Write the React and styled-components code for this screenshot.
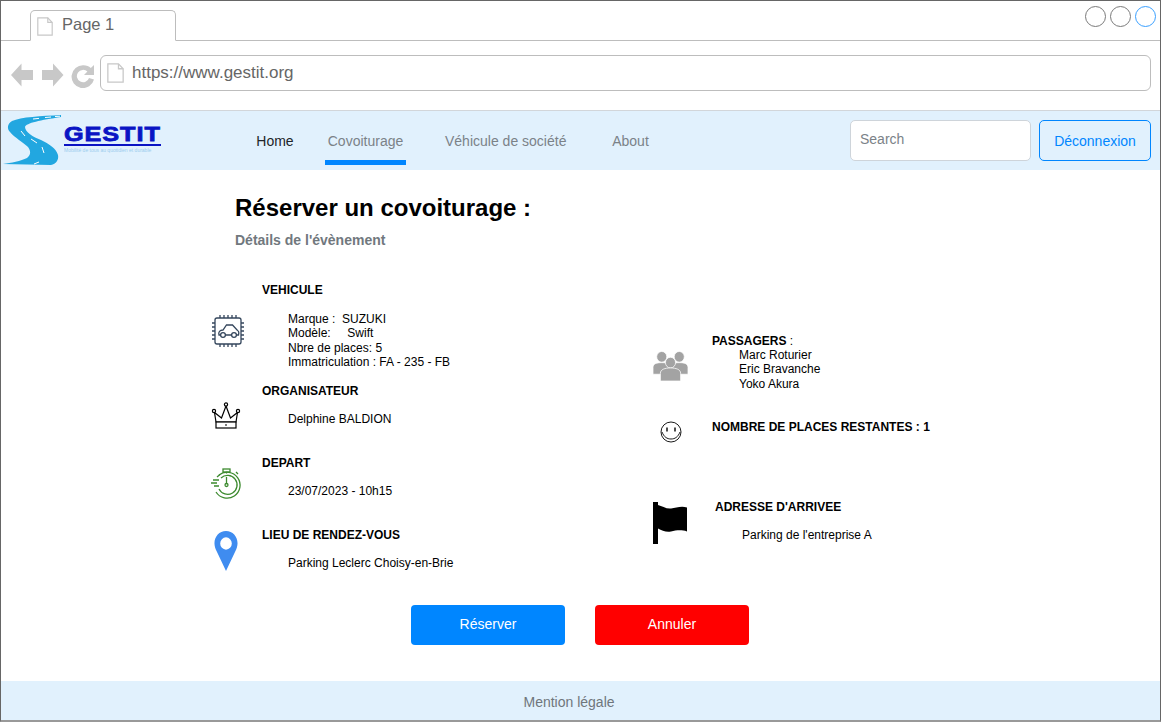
import React from 'react';
import styled, { createGlobalStyle } from 'styled-components';

const GlobalStyle = createGlobalStyle`
  html, body { margin: 0; padding: 0; background: #fff; }
  body { font-family: "Liberation Sans", Arial, sans-serif; }
`;

function PageIcon({ size = 16, h = 19 }) {
  return (
    <svg width={size} height={h} viewBox="0 0 16 18" preserveAspectRatio="none" fill="#fff" stroke="#c8c8c8" strokeWidth="1.2">
      <path d="M.8.8h10l4.4 4.4v12H.8z" />
      <path d="M10.8.8v4.4h4.4" fill="none" />
    </svg>
  );
}

function NavArrows() {
  return (
    <svg width="84" height="26" viewBox="0 0 84 26" fill="#c8c8c8">
      <path d="M0 13 10.500 1.500v6.500H22v10H10.500v6.500z" />
      <path d="M52.500 13 42 1.500v6.500H31v10h11v6.500z" />
      <path d="M71 3.800c3 0 5.400 1 7.300 2.800L81.500 3.500v10h-10l3.400-3.400a6.200 6.200 0 1 0 1.600 6.300l5 1.600A11.400 11.400 0 1 1 71 3.800z" transform="translate(1.500 -.5)" />
    </svg>
  );
}

function Logo() {
  return (
    <svg width="62" height="54" viewBox="0 0 62 54">
      <path d="M60 1C40 2 20 3 11 7 6 10 6 15 9 18c5 6 13 10 18 15 3 4 3 8-1 11-6 3-16 5-24 6l48 1c5-1 8-5 7-10-2-7-9-11-17-15-8-3-16-8-16-13 1-4 16-7 36-10z" fill="#22a7e0" />
      <path d="M32 5l6-.6M44 3.500l6-.5M54 2.500l5-.3M20 17l4 5M30 25l6 4M41 33l2 6M38 48l-5 2" stroke="#fff" strokeWidth="1" fill="none" />
    </svg>
  );
}

function CarChipIcon() {
  return (
    <svg width="34" height="34" viewBox="0 0 34 34" fill="none" stroke="#34465c" strokeWidth="1.3">
      <rect x="4" y="4" width="26" height="26" rx="2" />
      <path d="M9 1v3M13 1v3M17 1v3M21 1v3M25 1v3M9 30v3M13 30v3M17 30v3M21 30v3M25 30v3M1 9h3M1 13h3M1 17h3M1 21h3M1 25h3M30 9h3M30 13h3M30 17h3M30 21h3M30 25h3" />
      <path d="M9.500 21H8c-1-3 1-5 4-5l3.500-5h6l5 5.500c1.500.5 1.500 2.500 1 4.500h-2.500M14.500 21h6" />
      <circle cx="12" cy="21" r="2.400" />
      <circle cx="23" cy="21" r="2.400" />
    </svg>
  );
}

function CrownIcon() {
  return (
    <svg width="30" height="28" viewBox="0 0 30 28" fill="#fff" stroke="#000" strokeWidth="1.200">
      <path d="M5 20 3.500 10.500l7 5.500L15 4l4.500 12 7-5.500L25 20z" />
      <rect x="5" y="20" width="20" height="6" />
      <circle cx="15" cy="2.500" r="1.600" />
      <circle cx="3" cy="9" r="1.600" />
      <circle cx="27" cy="9" r="1.600" />
      <path d="M14 23h2" />
    </svg>
  );
}

function TimerIcon() {
  return (
    <svg width="32" height="32" viewBox="0 0 32 32" fill="none" stroke="#3c8a2e" strokeWidth="1.300">
      <path d="M8 7A13 13 0 1 1 5 24" />
      <path d="M10 10a9.500 9.500 0 1 1-2 11" />
      <rect x="12" y="1" width="7" height="3" />
      <path d="M15.500 4v1.500M25 4l2 2M6 9l3-2.500M2 12h6M0 15h6M3 18h5" />
      <path d="M15.500 9v6.500" />
      <circle cx="15.500" cy="17" r="1.500" />
    </svg>
  );
}

function PinIcon() {
  return (
    <svg width="24" height="41" viewBox="0 0 26 42" preserveAspectRatio="none">
      <path fillRule="evenodd" d="M13 0C5.800 0 .5 5.600.5 12.500c0 3 1 5.500 2.500 8.500L13 41l10-20c1.500-3 2.500-5.500 2.500-8.500C25.500 5.600 20.200 0 13 0zm0 6.500a6.300 6.300 0 1 1 0 12.600 6.300 6.300 0 0 1 0-12.600z" fill="#3f8cf0" />
    </svg>
  );
}

function PeopleIcon() {
  return (
    <svg width="35" height="31" viewBox="0 0 38 32" preserveAspectRatio="none" fill="#a3a3a3" stroke="#fff" strokeWidth=".8">
      <circle cx="9.500" cy="6" r="5.500" />
      <circle cx="28.500" cy="6" r="5.500" />
      <path d="M0 24v-7c0-4 4-5 9.500-5s9.500 1 9.500 5v7zM19 24v-7c0-4 4-5 9.500-5s9.500 1 9.500 5v7z" />
      <circle cx="19" cy="12" r="5.500" />
      <path d="M8 31v-8c0-4 5-5.500 11-5.500S30 19 30 23v8z" />
    </svg>
  );
}

function SmileyIcon() {
  return (
    <svg width="22" height="22" viewBox="0 0 22 22" fill="none" stroke="#000" strokeWidth=".9">
      <circle cx="11" cy="11" r="10" />
      <path d="M2 11c2 5 5 7 9 7s7-2 9-7" />
      <path d="M7 6.500v4M15 6.500v4" strokeWidth="1.400" />
    </svg>
  );
}

function FlagIcon() {
  return (
    <svg width="34" height="42" viewBox="0 0 34 42" fill="#000">
      <rect x="0" y="0" width="5" height="42" />
      <path d="M5 3c4 1 8 4 13 3.500s10-3 16-1v24c-6-2-11-1-16 0s-9-1-13-3z" />
    </svg>
  );
}

const leftItems = [
  { key: 'veh', icon: <CarChipIcon />, title: 'VEHICULE', lines: ['Marque :  SUZUKI', 'Modèle:     Swift', 'Nbre de places: 5', 'Immatriculation : FA - 235 - FB'], gap: 15, iconTop: 31, mb: 14 },
  { key: 'org', icon: <CrownIcon />, title: 'ORGANISATEUR', lines: ['Delphine BALDION'], gap: 14, iconTop: 18, mb: 30 },
  { key: 'dep', icon: <TimerIcon />, title: 'DEPART', lines: ['23/07/2023 - 10h15'], gap: 14, iconTop: 12, mb: 30 },
  { key: 'lieu', icon: <PinIcon />, title: 'LIEU DE RENDEZ-VOUS', lines: ['Parking Leclerc Choisy-en-Brie'], gap: 14, iconTop: 3, iconLeft: 3, mb: 0 },
];

function App() {
  return (
    <Frame>
      <GlobalStyle />
      <TabBar>
        <Tab>
          <PageIcon />
          Page 1
        </Tab>
        <WindowButtons>
          <WindowDot />
          <WindowDot />
          <WindowDot $active />
        </WindowButtons>
      </TabBar>

      <AddressRow>
        <NavArrows />
        <UrlBar>
          <PageIcon size={17} h={20} />
          https://www.gestit.org
        </UrlBar>
      </AddressRow>

      <NavBar>
        <LogoBox>
          <Logo />
          <Brand>
            <BrandName><BrandLetters>GESTIT</BrandLetters></BrandName>
            <BrandTag>Mobilité de tous au quotidien et durable</BrandTag>
          </Brand>
        </LogoBox>
        <NavLinks>
          <NavLink $dark $w={38}>Home</NavLink>
          <NavLink $active $w={81}>Covoiturage</NavLink>
          <NavLink $w={120}>Véhicule de société</NavLink>
          <NavLink $w={37}>About</NavLink>
        </NavLinks>
        <SearchBox>Search</SearchBox>
        <LogoutButton>Déconnexion</LogoutButton>
      </NavBar>

      <Main>
        <Title>Réserver un covoiturage :</Title>
        <Subtitle>Détails de l'évènement</Subtitle>

        <Columns>
          <LeftColumn>
            {leftItems.map(item => (
              <InfoRow key={item.key} $mb={item.mb}>
                <IconCell $top={item.iconTop} $left={item.iconLeft}>{item.icon}</IconCell>
                <div>
                  <InfoTitle>{item.title}</InfoTitle>
                  <InfoLines $gap={item.gap}>
                    {item.lines.map(l => <div key={l}>{l}</div>)}
                  </InfoLines>
                </div>
              </InfoRow>
            ))}
          </LeftColumn>

          <RightColumn>
            <RightRow $mb={29}>
              <RightIcon $top={17} $left={2}><PeopleIcon /></RightIcon>
              <div>
                <InfoTitle>PASSAGERS <Plain>:</Plain></InfoTitle>
                <RightLines $gap={0}>
                  <div>Marc Roturier</div>
                  <div>Eric Bravanche</div>
                  <div>Yoko Akura</div>
                </RightLines>
              </div>
            </RightRow>
            <RightRow $mb={66}>
              <RightIcon $top={1} $left={9}><SmileyIcon /></RightIcon>
              <InfoTitle>NOMBRE DE PLACES RESTANTES : 1</InfoTitle>
            </RightRow>
            <RightRow>
              <RightIcon $top={2} $left={2}><FlagIcon /></RightIcon>
              <ArrivalText>
                <InfoTitle>ADRESSE D'ARRIVEE</InfoTitle>
                <RightLines $gap={14}>
                  <div>Parking de l'entreprise A</div>
                </RightLines>
              </ArrivalText>
            </RightRow>
          </RightColumn>
        </Columns>

        <Actions>
          <ActionButton $bg="#0086ff">Réserver</ActionButton>
          <ActionButton $bg="#ff0000">Annuler</ActionButton>
        </Actions>
      </Main>

      <Footer>Mention légale</Footer>
    </Frame>
  );
}

export default App;

const Frame = styled.div`
  box-sizing: border-box;
  width: 1161px;
  height: 722px;
  border: 1px solid #666;
  border-bottom: 2px solid #999;
  display: flex;
  flex-direction: column;
  overflow: hidden;
  background: #fff;
`;

const TabBar = styled.div`
  height: 40px;
  flex: none;
  box-sizing: border-box;
  border-bottom: 1px solid #bdbdbd;
  padding: 9px 4px 0 29px;
  display: flex;
  justify-content: space-between;
  align-items: flex-start;
`;

const Tab = styled.div`
  box-sizing: border-box;
  width: 146px;
  height: 31px;
  border: 1px solid #bdbdbd;
  border-bottom: 1px solid #fff;
  border-radius: 5px 5px 0 0;
  background: #fff;
  padding: 6px 0 0 6px;
  display: flex;
  align-items: flex-start;
  gap: 9px;
  font-size: 16.5px;
  line-height: 15px;
  color: #666;
`;

const WindowButtons = styled.div`
  display: flex;
  gap: 4px;
  margin-top: -4px;
`;

const WindowDot = styled.div`
  box-sizing: border-box;
  width: 21px;
  height: 21px;
  border-radius: 50%;
  border: 1px solid ${p => (p.$active ? '#3aa0ff' : '#7a7a7a')};
`;

const AddressRow = styled.div`
  height: 70px;
  flex: none;
  box-sizing: border-box;
  padding: 14px 9px 0 10px;
  display: flex;
  align-items: flex-start;
  gap: 5px;
  border-bottom: 1px solid #d2d6da;

  & > svg:first-child {
    margin-top: 7px;
  }
`;

const UrlBar = styled.div`
  box-sizing: border-box;
  flex: 1;
  height: 36px;
  border: 1px solid #bdbdbd;
  border-radius: 6px;
  padding-left: 6px;
  display: flex;
  align-items: center;
  gap: 8px;
  font-size: 17px;
  color: #666;
`;

const NavBar = styled.div`
  height: 59px;
  flex: none;
  box-sizing: border-box;
  background: #e1f1fd;
  padding: 0 9px 0 0;
  display: flex;
  align-items: center;
`;

const LogoBox = styled.div`
  width: 255px;
  flex: none;
  align-self: flex-start;
  padding-top: 3px;
  display: flex;
  gap: 1px;
`;

const Brand = styled.div`
  width: 97px;
  padding-top: 9px;
`;

const BrandName = styled.div`
  font-size: 21px;
  line-height: 21px;
  font-weight: 700;
  color: #0a14c4;
  border-bottom: 2px solid #0a14c4;
`;

const BrandLetters = styled.span`
  display: inline-block;
  letter-spacing: 0.8px;
  -webkit-text-stroke: 0.8px #0a14c4;
  transform: scaleX(1.2);
  transform-origin: left center;
`;

const BrandTag = styled.div`
  font-size: 5px;
  line-height: 8px;
  white-space: nowrap;
  overflow: hidden;
  color: #9ccdee;
`;

const NavLinks = styled.div`
  flex: 1;
  align-self: stretch;
  display: flex;
  gap: 42px;
  align-items: flex-start;
`;

const NavLink = styled.div`
  box-sizing: border-box;
  width: ${p => p.$w}px;
  flex: none;
  padding-top: 22px;
  height: 54px;
  font-size: 14px;
  white-space: nowrap;
  text-align: center;
  color: ${p => (p.$dark ? '#212529' : '#7b8288')};
  border-bottom: ${p => (p.$active ? '5px solid #0086ff' : '5px solid transparent')};

  &:nth-child(2) {
    margin-left: -11px;
    margin-right: -3px;
  }
  &:nth-child(4) {
    margin-left: 5px;
  }
`;

const SearchBox = styled.div`
  box-sizing: border-box;
  width: 181px;
  height: 41px;
  margin-right: 8px;
  background: #fff;
  border: 1px solid #ced4da;
  border-radius: 5px;
  padding: 10px 9px;
  font-size: 14px;
  color: #7b8288;
`;

const LogoutButton = styled.div`
  box-sizing: border-box;
  width: 112px;
  height: 41px;
  border: 1px solid #0086ff;
  border-radius: 5px;
  display: flex;
  align-items: center;
  justify-content: center;
  font-size: 14px;
  color: #0086ff;
`;

const Main = styled.main`
  flex: 1;
  padding: 24px 0 0 234px;
  position: relative;
`;

const Title = styled.h1`
  margin: 0;
  font-size: 24px;
  line-height: 28px;
  font-weight: 700;
  color: #000;
`;

const Subtitle = styled.div`
  margin-top: 10px;
  font-size: 14px;
  line-height: 16px;
  font-weight: 700;
  color: #71787e;
`;

const Columns = styled.div`
  display: flex;
  margin: 35px 0 0 -24px;
  height: 296px;
`;

const LeftColumn = styled.div`
  width: 440px;
  flex: none;
`;

const InfoRow = styled.div`
  display: flex;
  margin-bottom: ${p => p.$mb}px;
`;

const IconCell = styled.div`
  box-sizing: border-box;
  width: 51px;
  height: 0;
  flex: none;
  padding-top: ${p => p.$top}px;
  padding-left: ${p => p.$left || 0}px;
`;

const InfoTitle = styled.div`
  font-size: 12px;
  line-height: 14px;
  font-weight: 700;
  color: #000;
`;

const Plain = styled.span`
  font-weight: 400;
`;

const InfoLines = styled.div`
  margin-top: ${p => p.$gap}px;
  padding-left: 26px;
  font-size: 12px;
  line-height: 14.4px;
  color: #000;
  white-space: pre;
`;

const RightLines = styled(InfoLines)`
  padding-left: 27px;
`;

const RightColumn = styled.div`
  flex: 1;
  padding-top: 51px;
`;

const RightRow = styled.div`
  position: relative;
  padding-left: 61px;
  margin-bottom: ${p => p.$mb || 0}px;
`;

const RightIcon = styled.div`
  position: absolute;
  left: ${p => p.$left || 0}px;
  top: ${p => p.$top}px;
`;

const ArrivalText = styled.div`
  margin-left: 3px;
`;

const Actions = styled.div`
  position: absolute;
  top: 435px;
  left: 410px;
  display: flex;
  gap: 30px;
`;

const ActionButton = styled.div`
  box-sizing: border-box;
  width: 154px;
  height: 40px;
  padding-bottom: 2px;
  border-radius: 4px;
  background: ${p => p.$bg};
  color: #fff;
  font-size: 14px;
  display: flex;
  align-items: center;
  justify-content: center;
`;

const Footer = styled.footer`
  box-sizing: border-box;
  height: 39px;
  flex: none;
  background: #e1f1fd;
  display: flex;
  align-items: center;
  justify-content: center;
  padding: 2px 23px 0 0;
  font-size: 14px;
  color: #6f767c;
`;
